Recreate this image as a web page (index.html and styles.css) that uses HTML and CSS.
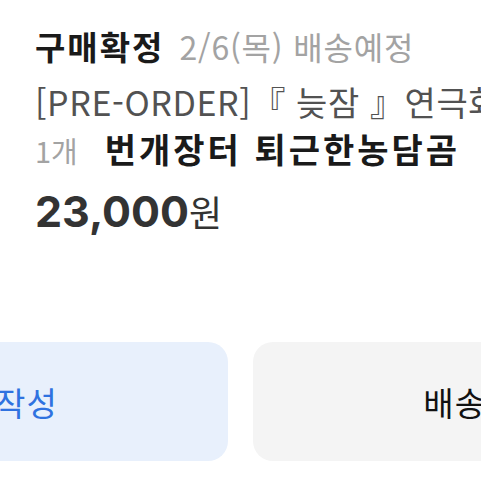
FILE: index.html
```html
<!DOCTYPE html>
<html lang="ko">
<head>
<meta charset="utf-8">
<link rel="stylesheet" href="styles.css">
</head>
<body>
<div class="page">
  <div class="info">
    <div class="status-row">
      <span class="status">구매확정</span>
      <span class="eta">2/6(목) 배송예정</span>
    </div>
    <div class="title">[PRE-ORDER]『 늦잠 』연극화 굿즈 세트</div>
    <div class="seller-row">
      <span class="qty">1개</span>
      <span class="seller">번개장터 퇴근한농담곰</span>
    </div>
    <div class="price"><span class="amount">23,000</span><span class="won">원</span></div>
  </div>
  <div class="actions">
    <div class="btn btn-review">후기 작성</div>
    <div class="btn btn-ship">배송조회</div>
  </div>
</div>
</body>
</html>
```
FILE: styles.css
```css
html, body {
  margin: 0;
  padding: 0;
  background: #ffffff;
  overflow: hidden;
}
body {
  width: 481px;
  height: 481px;
  font-family: "Noto Sans CJK KR", "Noto Sans", sans-serif;
}
.page {
  width: 481px;
  overflow: hidden;
}
.info {
  padding: 23px 0 0 35px;
  white-space: nowrap;
}
.status-row {
  display: flex;
  align-items: baseline;
  gap: 15px;
  height: 46px;
  line-height: 46px;
}
.status {
  font-size: 33px;
  font-weight: 700;
  letter-spacing: 2px;
  color: #1a1a1a;
}
.eta {
  font-size: 32px;
  letter-spacing: 0.8px;
  color: #a3a3a3;
}
.title {
  margin-top: 10px;
  font-size: 34px;
  letter-spacing: 0.6px;
  line-height: 46px;
  color: #525252;
}
.seller-row {
  display: flex;
  align-items: baseline;
  gap: 27px;
  line-height: 46px;
  margin-top: 1px;
}
.qty {
  font-size: 29px;
  color: #a3a3a3;
}
.seller {
  font-size: 34px;
  font-weight: 700;
  letter-spacing: 3px;
  color: #1a1a1a;
}
.price {
  margin-top: 15px;
  line-height: 46px;
  color: #333333;
}
.amount {
  font-family: "Inter", "Liberation Sans", sans-serif;
  font-size: 43px;
  font-weight: 700;
}
.won {
  font-size: 36px;
  font-weight: 400;
}
.actions {
  display: flex;
  gap: 25px;
  margin-top: 99px;
  margin-left: -238px;
}
.btn {
  flex: none;
  box-sizing: border-box;
  width: 466px;
  height: 119px;
  border-radius: 20px;
  display: flex;
  align-items: center;
  justify-content: center;
  font-size: 33px;
  letter-spacing: 1px;
}
.btn-review {
  background: #e8f0fc;
  color: #2f72e0;
  padding-right: 10px;
}
.btn-ship {
  background: #f4f4f4;
  color: #111111;
}
```
